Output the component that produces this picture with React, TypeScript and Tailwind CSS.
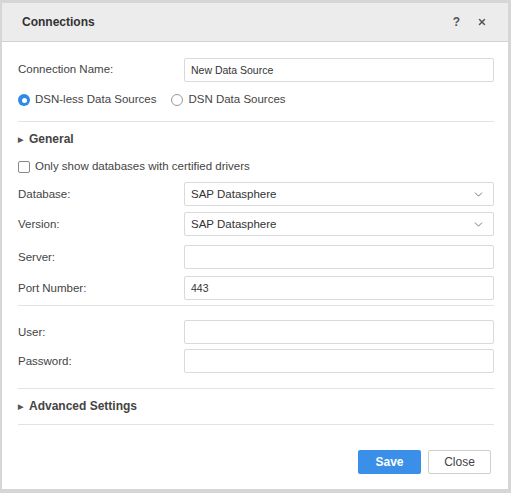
import { ChevronDown, X } from "lucide-react";

const LABEL = "w-[166px] shrink-0 text-[11.5px] text-[#444]";
const INPUT =
  "h-6 flex-1 rounded-[2px] border border-[#d9d9d9] bg-white px-[6px] text-[10.5px] text-[#333] outline-none";

function Field({ label, value = "", className = "" }: { label: string; value?: string; className?: string }) {
  return (
    <div className={`flex items-center ${className}`}>
      <span className={LABEL}>{label}</span>
      <input className={INPUT} defaultValue={value} />
    </div>
  );
}

function Select({ label, value, className = "" }: { label: string; value: string; className?: string }) {
  return (
    <div className={`flex items-center ${className}`}>
      <span className={LABEL}>{label}</span>
      <div className="flex h-6 flex-1 items-center justify-between rounded-[2px] border border-[#d9d9d9] bg-white pl-[6px] pr-[8px] text-[11.5px] text-[#333]">
        <span>{value}</span>
        <ChevronDown size={13} strokeWidth={1.6} className="text-[#666]" />
      </div>
    </div>
  );
}

function Section({ title }: { title: string }) {
  return (
    <div className="flex items-center gap-[6px] text-[12px] font-bold text-[#444]">
      <span className="text-[7px] leading-none text-[#555]">▶</span>
      {title}
    </div>
  );
}

export default function App() {
  return (
    <div className="h-[493px] w-[511px] bg-[#d6d6d6] pl-[2px] pt-[3px] font-['Liberation_Sans',Arial,sans-serif]">
      <div className="flex h-[486px] w-[506px] flex-col bg-white">
        <div className="flex h-[39px] items-center border-b border-[#d2d2d2] bg-[#ececec] pl-5 pr-[21px]">
          <span className="flex-1 text-[12px] font-bold text-[#333]">Connections</span>
          <span className="mr-[17px] text-[12px] font-bold text-[#555]">?</span>
          <X size={10} strokeWidth={3.5} className="text-[#555]" />
        </div>

        <div className="flex flex-col pl-4 pr-[14px]">
          <Field label="Connection Name:" value="New Data Source" className="mt-[16px]" />

          <div className="mt-[7px] flex h-[22px] items-center text-[11.5px] text-[#444]">
            <span className="mr-[5px] flex h-[12px] w-[12px] items-center justify-center rounded-full bg-[#2f8ae5]">
              <span className="h-[5px] w-[5px] rounded-full bg-white" />
            </span>
            DSN-less Data Sources
            <span className="ml-[15px] mr-[5px] h-[12px] w-[12px] rounded-full border border-[#999]" />
            DSN Data Sources
          </div>

          <div className="mt-[10px] h-px bg-[#e2e2e2]" />

          <div className="mt-[8px]">
            <Section title="General" />
          </div>

          <div className="mt-[10px] flex items-center text-[11.5px] text-[#444]">
            <span className="mr-[5px] h-[12px] w-[12px] rounded-[2px] border border-[#888]" />
            Only show databases with certified drivers
          </div>

          <Select label="Database:" value="SAP Datasphere" className="mt-[7px]" />
          <Select label="Version:" value="SAP Datasphere" className="mt-[6px]" />
          <Field label="Server:" className="mt-[9px]" />
          <Field label="Port Number:" value="443" className="mt-[7px]" />

          <div className="mt-[5px] h-px bg-[#e2e2e2]" />

          <Field label="User:" className="mt-[14px]" />
          <Field label="Password:" className="mt-[5px]" />

          <div className="mt-[15px] h-px bg-[#e2e2e2]" />

          <div className="mt-[8px]">
            <Section title="Advanced Settings" />
          </div>

          <div className="mt-[9px] h-px bg-[#e2e2e2]" />

          <div className="mt-[25px] flex justify-end gap-[7px] pr-[3px]">
            <button className="h-6 w-[63px] rounded-[2px] bg-[#3a8fe8] text-[12px] font-bold text-white">Save</button>
            <button className="h-6 w-[63px] rounded-[2px] border border-[#cfcfcf] bg-white text-[12px] text-[#444]">
              Close
            </button>
          </div>
        </div>
      </div>
    </div>
  );
}
